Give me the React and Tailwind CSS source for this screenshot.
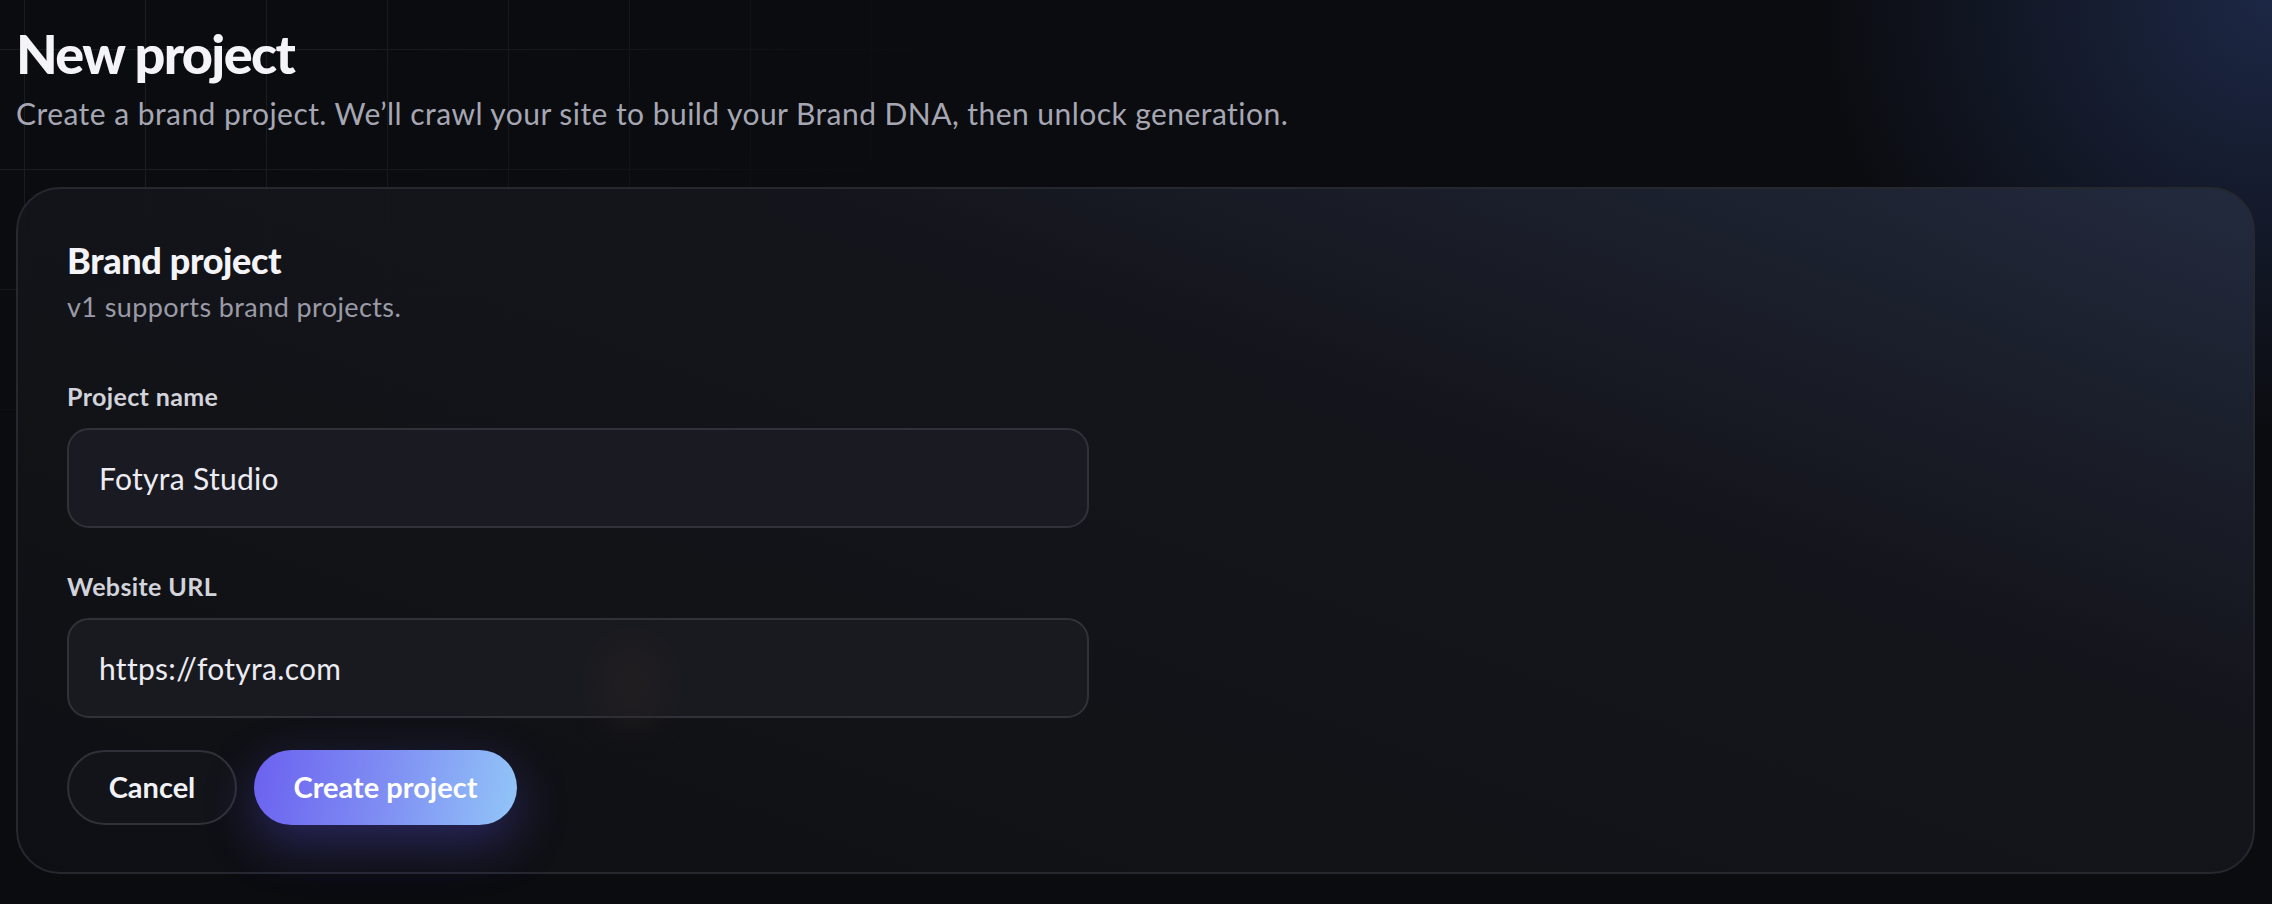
import { useState } from 'react';

// Formulário de novo projeto (tema escuro)
export default function App() {
  const [nome, setNome] = useState('Fotyra Studio');
  const [url, setUrl] = useState('https://fotyra.com');

  return (
    <div className="relative min-h-[904px] w-full overflow-hidden bg-[#0b0c10] font-['Lato',sans-serif] text-white">
      {/* grade de fundo */}
      <div className="pointer-events-none absolute inset-0 bg-[linear-gradient(to_right,#1b1d24_1px,transparent_1px),linear-gradient(to_bottom,#1b1d24_1px,transparent_1px)] bg-[size:121px_120px] bg-[position:24px_49px] [mask-image:radial-gradient(ellipse_1000px_520px_at_0%_0%,black_35%,transparent_100%)]" />
      {/* brilho azul no canto */}
      <div className="pointer-events-none absolute inset-0 bg-[radial-gradient(ellipse_650px_620px_at_100%_0%,rgba(42,62,112,0.55),transparent_70%)]" />

      <div className="relative px-4 pt-[24px]">
        <h1 className="text-[54px] font-black leading-[1.1] tracking-[-0.03em] text-[#f4f4f8]">New project</h1>
        <p className="mt-[11px] text-[30px] leading-[1.3] tracking-[0.015em] text-[#a6a7b3]">
          Create a brand project. We’ll crawl your site to build your Brand DNA, then unlock generation.
        </p>

        <div className="mt-[54px] h-[687px] w-[2239px] rounded-[44px] border-2 border-[#262830] bg-[linear-gradient(200deg,rgba(36,44,64,0.9)_0%,rgba(22,23,30,0.85)_35%,rgba(18,19,23,0.95)_70%,rgba(14,15,20,1)_100%)] px-[49px] pt-[50px]">
          <h2 className="text-[36px] font-black leading-[1.2] tracking-[-0.01em] text-[#f4f4f8]">Brand project</h2>
          <p className="mt-[6px] text-[27px] leading-[1.3] tracking-[0.015em] text-[#9a9ba6]">v1 supports brand projects.</p>

          <label htmlFor="nome" className="mt-[57px] block text-[25px] font-bold leading-[1.2] tracking-[0.015em] text-[#d2d3db]">
            Project name
          </label>
          <input
            id="nome"
            value={nome}
            onChange={(e) => setNome(e.target.value)}
            className="mt-[17px] block h-[100px] w-[1022px] rounded-[22px] border-2 border-[#30323a] bg-[#1a1b22] px-[30px] text-[30px] tracking-[0.01em] text-[#ececf2] outline-none"
          />

          <label htmlFor="url" className="mt-[43px] block text-[25px] font-bold leading-[1.2] tracking-[0.015em] text-[#d2d3db]">
            Website URL
          </label>
          <input
            id="url"
            value={url}
            onChange={(e) => setUrl(e.target.value)}
            className="mt-[17px] block h-[100px] w-[1022px] rounded-[22px] border-2 border-[#30323a] bg-[#191a20] px-[30px] text-[30px] tracking-[0.01em] text-[#ececf2] outline-none"
          />

          <div className="relative mt-[32px] flex gap-[17px]">
            {/* mancha desfocada sobre o campo */}
            <div className="pointer-events-none absolute left-[530px] top-[-110px] h-[90px] w-[70px] rounded-full bg-[#2a2220] opacity-40 blur-[14px]" />
            <button
              type="button"
              className="h-[75px] w-[170px] rounded-full border-2 border-[#2f3139] bg-[#131419] text-[29px] font-bold text-[#f2f2f6]"
            >
              Cancel
            </button>
            <button
              type="submit"
              className="h-[75px] w-[263px] rounded-full bg-[linear-gradient(100deg,#6b61f0_0%,#7f8ef3_50%,#92c6f8_100%)] text-[29px] font-bold text-white shadow-[0_18px_50px_rgba(90,80,230,0.35)]"
            >
              Create project
            </button>
          </div>
        </div>
      </div>
    </div>
  );
}
